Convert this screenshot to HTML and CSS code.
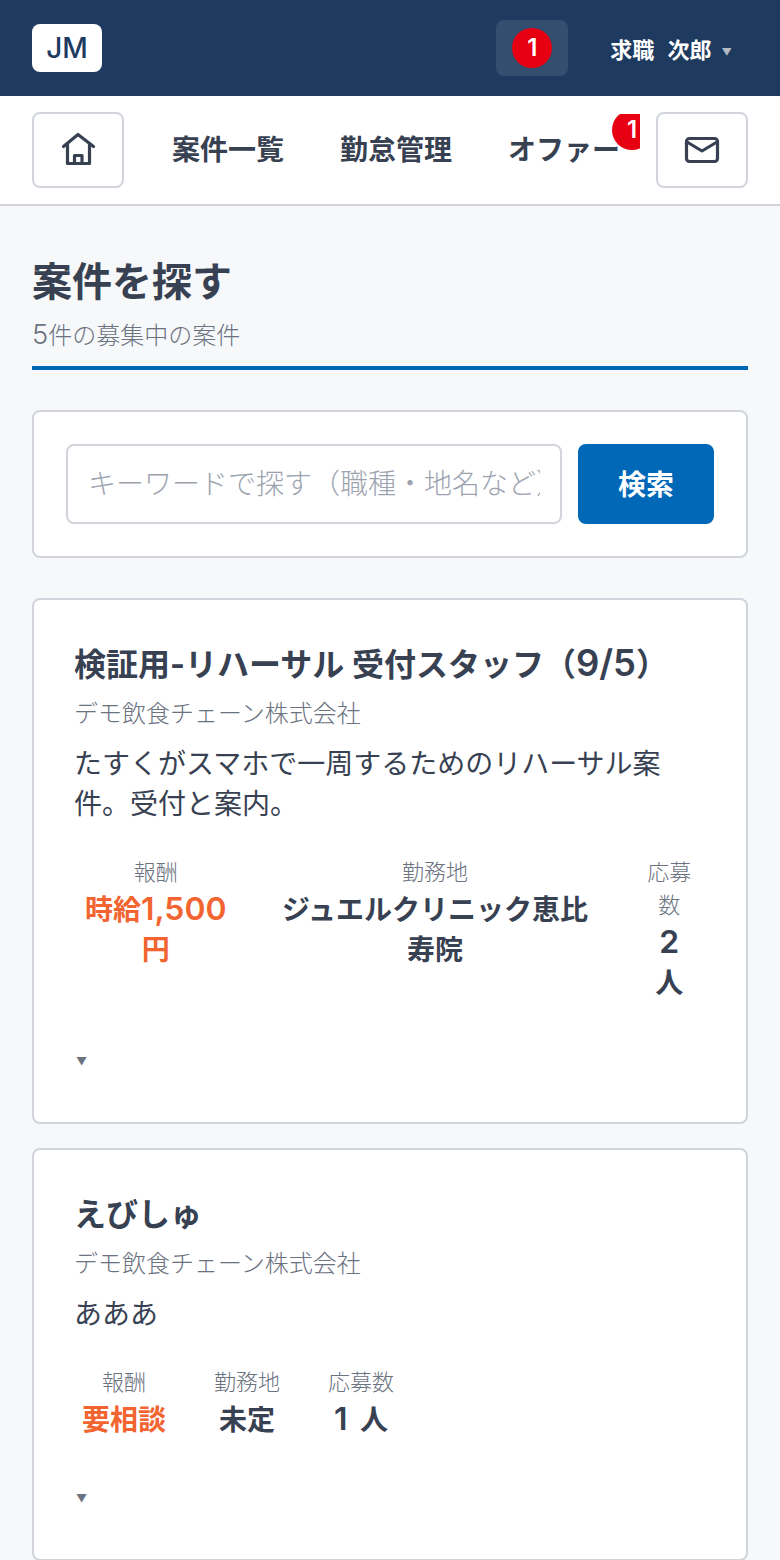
FILE: index.html
```html
<!DOCTYPE html>
<html lang="ja">
<head>
    <meta charset="UTF-8">
    <meta name="viewport" content="width=device-width, initial-scale=1.0">
    <title>案件を探す</title>
    <link rel="stylesheet" href="styles.css">
</head>
<body>
    <header class="topbar">
        <div class="logo">JM</div>
        <div class="topbar-right">
            <div class="notice"><span class="notice-badge">1</span></div>
            <div class="user">求職 次郎<span class="user-arrow">▼</span></div>
        </div>
    </header>

    <nav class="nav">
        <a class="nav-btn">
            <svg width="40" height="40" viewBox="0 0 40 40" fill="none" stroke="#374151" stroke-width="3.2" stroke-linecap="round" stroke-linejoin="round">
                <path d="M5.500 16.500 20 4.500l15.500 12"/>
                <path d="M9.500 14v19.500h22V14"/>
                <path d="M16.500 33v-7.500H24V33"/>
            </svg>
        </a>
        <div class="nav-links">
            <a class="nav-link">案件一覧</a>
            <a class="nav-link">勤怠管理</a>
            <a class="nav-link">オファー<span class="nav-badge">1</span></a>
        </div>
        <a class="nav-btn">
            <svg width="40" height="40" viewBox="0 0 40 40" fill="none" stroke="#374151" stroke-width="3.2" stroke-linecap="round" stroke-linejoin="round">
                <rect x="4.500" y="8.500" width="31" height="23" rx="3"/>
                <path d="M5 12l15 9 15-9"/>
            </svg>
        </a>
    </nav>

    <main class="main">
        <div class="page-head">
            <h1>案件を探す</h1>
            <p><span class="num">5</span>件の募集中の案件</p>
        </div>

        <div class="search">
            <input class="search-input" type="text" placeholder="キーワードで探す（職種・地名など）">
            <button class="search-btn">検索</button>
        </div>

        <div class="job">
            <h2>検証用-リハーサル 受付スタッフ（<span class="num">9/5</span>）</h2>
            <p class="company">デモ飲食チェーン株式会社</p>
            <p class="desc">たすくがスマホで一周するためのリハーサル案件。受付と案内。</p>
            <div class="stats">
                <div class="stat">
                    <div class="stat-label">報酬</div>
                    <div class="stat-value pay">時給<span class="num">1,500</span>円</div>
                </div>
                <div class="stat">
                    <div class="stat-label">勤務地</div>
                    <div class="stat-value">ジュエルクリニック恵比寿院</div>
                </div>
                <div class="stat">
                    <div class="stat-label">応募数</div>
                    <div class="stat-value"><span class="num">2</span> 人</div>
                </div>
            </div>
            <div class="more">▼</div>
        </div>

        <div class="job">
            <h2>えびしゅ</h2>
            <p class="company">デモ飲食チェーン株式会社</p>
            <p class="desc">あああ</p>
            <div class="stats">
                <div class="stat">
                    <div class="stat-label">報酬</div>
                    <div class="stat-value pay">要相談</div>
                </div>
                <div class="stat">
                    <div class="stat-label">勤務地</div>
                    <div class="stat-value">未定</div>
                </div>
                <div class="stat">
                    <div class="stat-label">応募数</div>
                    <div class="stat-value"><span class="num">1</span> 人</div>
                </div>
            </div>
            <div class="more">▼</div>
        </div>
    </main>
</body>
</html>
```

FILE: styles.css
```css
* {
    box-sizing: border-box;
}
body {
    font-family: Inter, 'Noto Sans CJK JP', sans-serif;
    margin: 0;
    background: #f7f8fa;
    color: #374151;
}
.num {
    font-size: 1.14em;
    font-weight: 600;
    line-height: 1;
}
.topbar {
    display: flex;
    align-items: center;
    justify-content: space-between;
    height: 96px;
    padding: 0 32px;
    background: #1e3a5f;
}
.logo {
    width: 70px;
    height: 48px;
    line-height: 48px;
    text-align: center;
    background: white;
    border-radius: 8px;
    color: #1e3a5f;
    font-size: 28px;
    font-weight: 500;
}
.topbar-right {
    display: flex;
    align-items: center;
}
.notice {
    display: flex;
    align-items: center;
    justify-content: center;
    width: 72px;
    height: 56px;
    margin-right: 26px;
    background: rgba(255,255,255,0.1);
    border-radius: 8px;
}
.notice-badge {
    width: 40px;
    height: 40px;
    line-height: 40px;
    text-align: center;
    background: #e60012;
    border-radius: 50%;
    color: white;
    font-size: 24px;
    font-weight: 600;
}
.user {
    display: flex;
    align-items: center;
    padding: 0 16px;
    color: white;
    font-size: 22px;
    font-weight: 700;
    word-spacing: 8px;
}
.user-arrow {
    margin-left: 10px;
    margin-top: 8px;
    color: #b4bac4;
    font-size: 10px;
}
.nav {
    display: flex;
    align-items: center;
    height: 110px;
    padding: 0 32px;
    background: white;
    border-bottom: 2px solid #d1d5db;
}
.nav-btn {
    display: flex;
    align-items: center;
    justify-content: center;
    flex: none;
    width: 92px;
    height: 76px;
    background: white;
    border: 2px solid #d1d5db;
    border-radius: 8px;
}
.nav-links {
    display: flex;
    flex: 1;
    gap: 56px;
    height: 72px;
    margin: 0 16px;
    padding: 0 32px;
    overflow: hidden;
}
.nav-link {
    position: relative;
    flex: none;
    line-height: 72px;
    font-size: 28px;
    font-weight: 700;
}
.nav-badge {
    position: absolute;
    top: -4px;
    left: 104px;
    width: 40px;
    height: 40px;
    line-height: 40px;
    text-align: center;
    background: #e60012;
    border-radius: 50%;
    color: white;
    font-size: 24px;
    font-weight: 600;
}
.main {
    padding: 48px 32px 0;
}
.page-head {
    margin-bottom: 40px;
    padding-bottom: 12px;
    border-bottom: 4px solid #0068b7;
}
.page-head h1 {
    margin: 0;
    line-height: 56px;
    font-size: 40px;
    font-weight: 700;
}
.page-head p {
    margin: 8px 0 0;
    line-height: 36px;
    font-size: 24px;
    font-weight: 300;
    color: #6b7280;
}
.page-head .num,
.stat-label {
    font-weight: 300;
}
.search {
    display: flex;
    gap: 16px;
    margin-bottom: 40px;
    padding: 32px;
    background: white;
    border: 2px solid #d1d5db;
    border-radius: 8px;
}
.search-input {
    flex: 1;
    min-width: 0;
    height: 80px;
    padding: 0 20px;
    background: white;
    border: 2px solid #d1d5db;
    border-radius: 8px;
    font-family: inherit;
    font-size: 28px;
    font-weight: 300;
}
.search-input::placeholder {
    color: #9ca3af;
}
.search-btn {
    flex: none;
    width: 136px;
    height: 80px;
    padding: 0 0 3px;
    background: #0068b7;
    border: none;
    border-radius: 8px;
    color: white;
    font-family: inherit;
    font-size: 28px;
    font-weight: 700;
}
.job {
    margin-bottom: 24px;
    padding: 40px;
    background: white;
    border: 2px solid #d1d5db;
    border-radius: 8px;
}
.job h2 {
    margin: 0;
    padding-top: 1px;
    line-height: 48px;
    font-size: 32px;
    font-weight: 700;
}
.company {
    margin: 7px 0 0;
    line-height: 36px;
    font-size: 24px;
    font-weight: 300;
    color: #6b7280;
}
.desc {
    margin: 12px 0 0;
    line-height: 40px;
    font-size: 28px;
}
.stats {
    display: flex;
    gap: 48px;
    margin-top: 32px;
    padding: 0 8px;
}
.stat {
    text-align: center;
}
.stat-label {
    line-height: 33px;
    font-size: 22px;
    color: #6b7280;
}
.stat-value {
    margin-top: 1px;
    line-height: 40px;
    font-size: 28px;
    font-weight: 700;
    word-spacing: 6px;
}
.pay {
    color: #f26430;
}
.more {
    height: 42px;
    margin-top: 37px;
    padding-left: 2px;
    line-height: 43px;
    font-size: 11px;
    color: #6b7280;
}
```
